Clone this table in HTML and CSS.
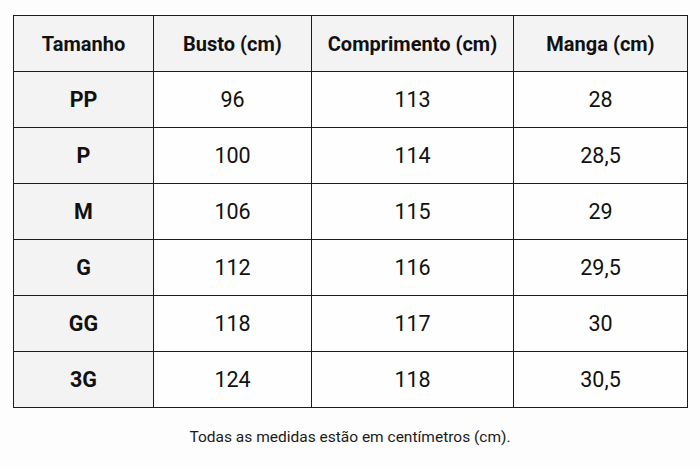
FILE: index.html
```html
<!DOCTYPE html>
<html lang="pt-BR">
<head>
<meta charset="utf-8">
<title>Tabela de medidas</title>
<link rel="stylesheet" href="styles.css">
</head>
<body>
<main class="page">
  <table class="sizes">
    <colgroup>
      <col class="c1"><col class="c2"><col class="c3"><col class="c4">
    </colgroup>
    <thead>
      <tr><th>Tamanho</th><th>Busto (cm)</th><th>Comprimento (cm)</th><th>Manga (cm)</th></tr>
    </thead>
    <tbody>
      <tr><th>PP</th><td>96</td><td>113</td><td>28</td></tr>
      <tr><th>P</th><td>100</td><td>114</td><td>28,5</td></tr>
      <tr><th>M</th><td>106</td><td>115</td><td>29</td></tr>
      <tr><th>G</th><td>112</td><td>116</td><td>29,5</td></tr>
      <tr><th>GG</th><td>118</td><td>117</td><td>30</td></tr>
      <tr><th>3G</th><td>124</td><td>118</td><td>30,5</td></tr>
    </tbody>
  </table>
  <p class="note">Todas as medidas estão em centímetros (cm).</p>
</main>
</body>
</html>
```
FILE: styles.css
```css
html, body {
  margin: 0;
  padding: 0;
  background: #fdfdfd;
}
body {
  font-family: Roboto, "Liberation Sans", sans-serif;
  color: #111;
}
.page {
  padding: 15px 13px 0 13px;
}
.sizes {
  width: 674px;
  border-collapse: collapse;
  table-layout: fixed;
  border: 1.5px solid #1c1c1c;
}
.c1 { width: 140px; }
.c2 { width: 158px; }
.c3 { width: 202px; }
.c4 { width: 174px; }
.sizes th, .sizes td {
  border: 1.5px solid #1c1c1c;
  height: 55px;
  padding: 0;
  text-align: center;
  vertical-align: middle;
}
.sizes thead th {
  background: #f3f3f3;
  font-size: 20px;
  font-weight: 700;
  height: 55px;
}
.sizes tbody th {
  background: #f3f3f3;
  font-size: 21.5px;
  font-weight: 700;
}
.sizes td {
  background: #fefefe;
  font-size: 21.5px;
  font-weight: 400;
}
.note {
  margin: 20px 0 0 0;
  text-align: center;
  font-size: 15.5px;
  color: #1a1a1a;
}
```
